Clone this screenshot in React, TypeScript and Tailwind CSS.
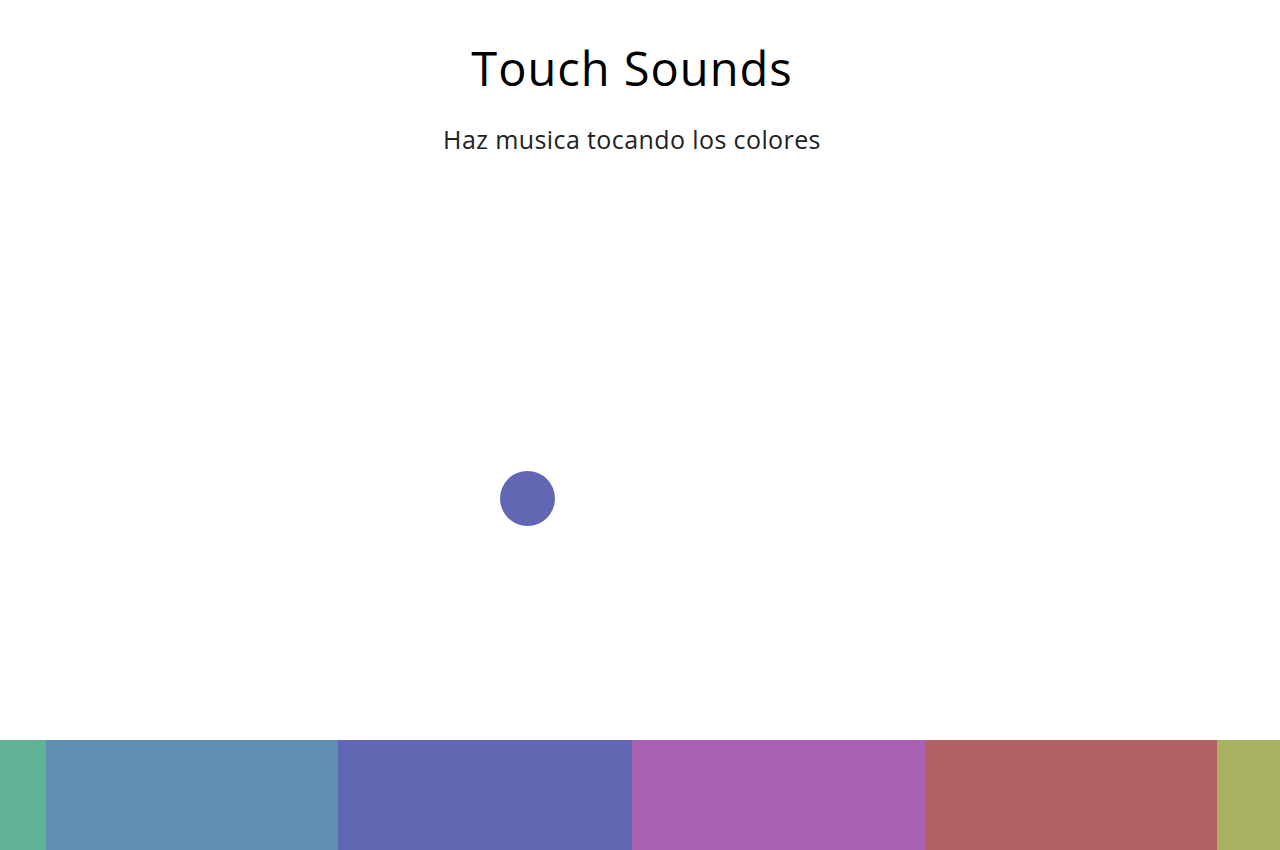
import React from "react";

const pads = [
  { color: "bg-[#60b394]", w: "w-[46px]" },
  { color: "bg-[#608db2]", w: "w-[292px]" },
  { color: "bg-[#6167b2]", w: "w-[294px]" },
  { color: "bg-[#a860b2]", w: "w-[293px]" },
  { color: "bg-[#b26064]", w: "w-[292px]" },
  { color: "bg-[#a9b260]", w: "w-[63px]" },
];

export default function App() {
  return (
    <div className="relative h-[850px] w-full overflow-hidden bg-white flex flex-col font-['Open_Sans',sans-serif]">
      <header className="flex flex-col items-center pt-[37px] pr-[16px]">
        <h1 className="text-[47px] leading-[62px] text-black tracking-[1px]">Touch Sounds</h1>
        <p className="mt-[24px] text-[25px] leading-[32px] text-[#222] tracking-[0.4px]">Haz musica tocando los colores</p>
      </header>

      <div className="flex-1" />

      {/* bolita que cae */}
      <div className="absolute left-[500px] top-[471px] h-[55px] w-[55px] rounded-full bg-[#6167b2]" />

      <div className="flex h-[110px] w-full overflow-hidden">
        {pads.map((p, i) => (
          <div key={i} className={`${p.color} ${p.w} h-full shrink-0`} />
        ))}
      </div>
    </div>
  );
}
